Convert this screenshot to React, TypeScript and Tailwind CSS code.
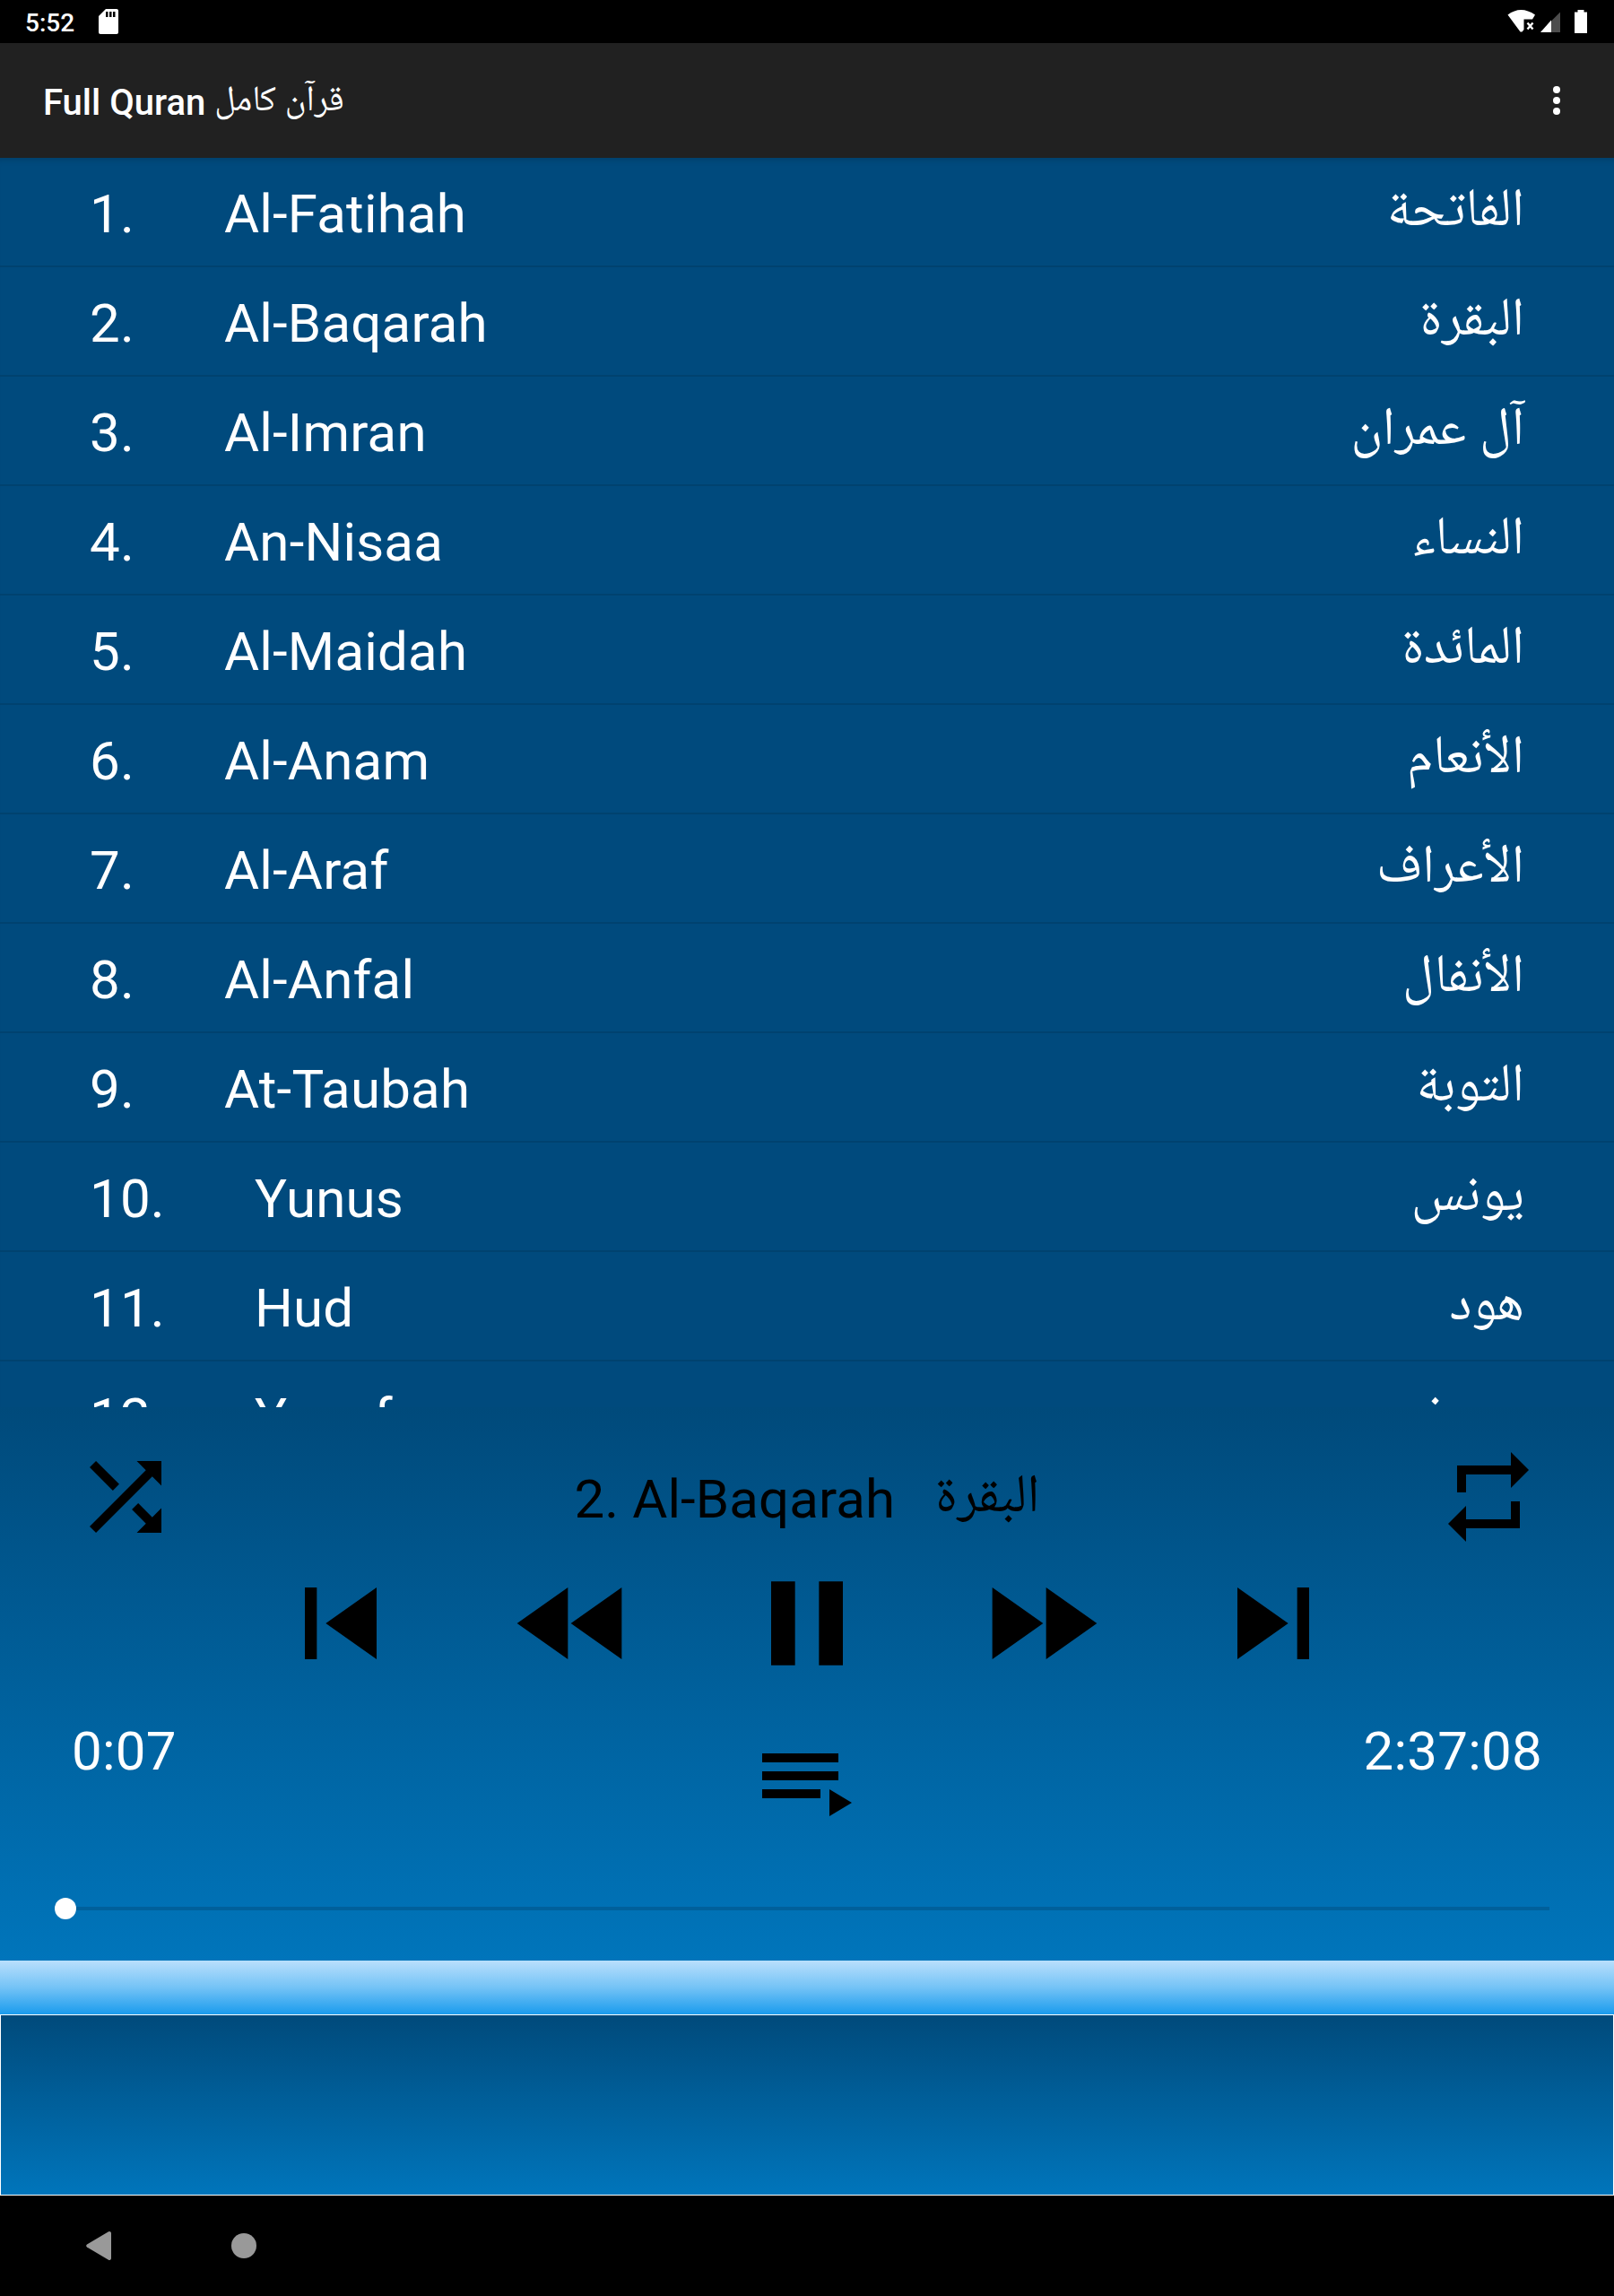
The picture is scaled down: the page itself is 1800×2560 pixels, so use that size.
const surahs = [
    { name: 'Al-Fatihah', arabic: 'الفاتحة' },
    { name: 'Al-Baqarah', arabic: 'البقرة' },
    { name: 'Al-Imran', arabic: 'آل عمران' },
    { name: 'An-Nisaa', arabic: 'النساء' },
    { name: 'Al-Maidah', arabic: 'المائدة' },
    { name: 'Al-Anam', arabic: 'الأنعام' },
    { name: 'Al-Araf', arabic: 'الأعراف' },
    { name: 'Al-Anfal', arabic: 'الأنفال' },
    { name: 'At-Taubah', arabic: 'التوبة' },
    { name: 'Yunus', arabic: 'يونس' },
    { name: 'Hud', arabic: 'هود' },
    { name: 'Yusuf', arabic: 'يوسف' },
];

function Icon({ path, className }: { path: string; className: string }) {
    return (
        <svg viewBox="0 0 24 24" fill="currentColor" className={className}>
            <path d={path} />
        </svg>
    );
}

function StatusBar() {
    return (
        <div className="flex h-12 items-center bg-black pl-7 text-white">
            <span className="w-[82px] pt-1 text-[28px] leading-none font-medium">5:52</span>
            <svg viewBox="0 0 22 28" className="h-7 w-[22px]">
                <path d="M8 0h12a2 2 0 0 1 2 2v24a2 2 0 0 1-2 2H2a2 2 0 0 1-2-2V8z" fill="#fff" />
                <path d="M8 3h2.5v6H8zM12 3h2.5v6H12zM16 3h2.5v6H16z" fill="#000" />
            </svg>
            <svg viewBox="0 0 100 48" className="mr-5 ml-auto h-12 w-[100px]">
                <path d="M1.500 16.500Q16 5.500 32 16.500L29 21.500H19.500V33L17.500 35.500H15.500z" fill="#fff" />
                <path d="M23.500 25.500l6 7M29.500 25.500l-6 7" stroke="#fff" strokeWidth="2.400" />
                <path d="M50 23.500L60 13.500V36H50z" fill="#4d4d4d" />
                <path d="M38 36L50 22.500V36z" fill="#fff" />
                <path d="M79.500 11h7v2.500H90V37H76V13.500h3.500z" fill="#fff" />
            </svg>
        </div>
    );
}

function AppBar() {
    return (
        <div className="flex h-32 items-center justify-between bg-[#212121] pr-[60px] pl-12 text-white">
            <h1 className="flex items-center text-[40px] leading-none font-medium">
                <span className="pt-1.5">Full Quran</span>
                <span className="mb-1 ml-2.5 font-normal" dir="rtl">
                    قرآن كامل
                </span>
            </h1>
            <div className="flex flex-col gap-1">
                <span className="size-2 rounded-full bg-white" />
                <span className="size-2 rounded-full bg-white" />
                <span className="size-2 rounded-full bg-white" />
            </div>
        </div>
    );
}

function SurahList() {
    return (
        <ul className="h-[1393px] overflow-hidden bg-[#004a7d] text-white shadow-[inset_0_8px_8px_-8px_#00000040]">
            {surahs.map((surah, index) => (
                <li
                    key={surah.name}
                    className="flex h-[122px] items-center border-b-2 border-[#00426f] px-[100px] text-[60px] leading-[70px]"
                >
                    <span className="mt-1.5 tracking-[0.2px]">{index + 1}.</span>
                    <span className="mt-1.5 ml-[100px] tracking-[0.2px]">{surah.name}</span>
                    <span className="mb-2.5 ml-auto" dir="rtl">
                        {surah.arabic}
                    </span>
                </li>
            ))}
        </ul>
    );
}

function Player() {
    return (
        <div className="flex h-[617px] flex-col bg-linear-to-b/srgb from-[#004a7b] to-[#0075bb] text-black">
            <div className="mt-10 flex h-[120px] items-center justify-between px-20">
                <Icon
                    className="size-[120px]"
                    path="M10.590 9.170L5.410 4 4 5.410l5.170 5.170 1.420-1.410zM14.500 4l2.040 2.040L4 18.590 5.410 20 17.960 7.460 20 9.500V4h-5.500zm.330 9.410l-1.410 1.410 3.130 3.130L14.500 20H20v-5.500l-2.040 2.040-3.130-3.130z"
                />
                <div className="flex items-center text-[60px] leading-[70px]">
                    <span className="mt-1.5 tracking-[0.1px]">2. Al-Baqarah</span>
                    <span className="mb-2 ml-[45px]" dir="rtl">
                        البقرة
                    </span>
                </div>
                <Icon
                    className="size-[120px]"
                    path="M7 7h10v3l4-4-4-4v3H5v6h2V7zm10 10H7v-3l-4 4 4 4v-3h12v-6h-2v4z"
                />
            </div>
            <div className="mt-px flex justify-center gap-[100px]">
                <Icon className="size-40" path="M6 6h2v12H6zm3.500 6l8.500 6V6z" />
                <Icon className="size-40" path="M11 18V6l-8.500 6 8.500 6zm.5-6l8.500 6V6l-8.500 6z" />
                <Icon className="size-40" path="M6 19h4V5H6v14zm8-14v14h4V5h-4z" />
                <Icon className="size-40" path="M4 18l8.500-6L4 6v12zm9-12v12l8.500-6L13 6z" />
                <Icon className="size-40" path="M6 18l8.500-6L6 6v12zM16 6v12h2V6h-2z" />
            </div>
            <div className="mt-10 grid grid-cols-3 px-20 text-[60px] leading-[70px] tracking-[0.25px] text-white">
                <span className="-mt-3">0:07</span>
                <Icon
                    className="size-[120px] justify-self-center text-black"
                    path="M19 9H2v2h17V9zm0-4H2v2h17V5zM2 15h13v-2H2v2zm15-2v6l5-3-5-3z"
                />
                <span className="-mt-3 text-right">2:37:08</span>
            </div>
            <div className="mt-[66px] flex items-center pr-[72px] pl-[61px]">
                <span className="size-6 rounded-full bg-white" />
                <span className="h-1 flex-1 bg-[#00609b]" />
            </div>
        </div>
    );
}

function NavigationBar() {
    return (
        <div className="flex h-28 items-center bg-black pl-24 text-[#999]">
            <svg viewBox="0 0 28 32" fill="currentColor" className="h-8 w-7">
                <path d="M25 .3a2 2 0 0 1 3 1.700v28a2 2 0 0 1-3 1.700L1 17.500a2 2 0 0 1 0-3z" />
            </svg>
            <span className="ml-[134px] size-7 rounded-full bg-current" />
        </div>
    );
}

export default function App() {
    return (
        <div className="flex h-[2560px] w-[1800px] flex-col overflow-hidden bg-black font-[Roboto,'Noto_Naskh_Arabic','Noto_Sans_Arabic','DejaVu_Sans',sans-serif]">
            <StatusBar />
            <AppBar />
            <SurahList />
            <Player />
            <div className="h-[60px] bg-linear-to-b/srgb from-[#b9dffc] via-[#74c3f6] to-[#1a9bed]" />
            <div className="h-[202px] border border-white bg-linear-to-b/srgb from-[#004a7b] to-[#0075bb]" />
            <NavigationBar />
        </div>
    );
}
